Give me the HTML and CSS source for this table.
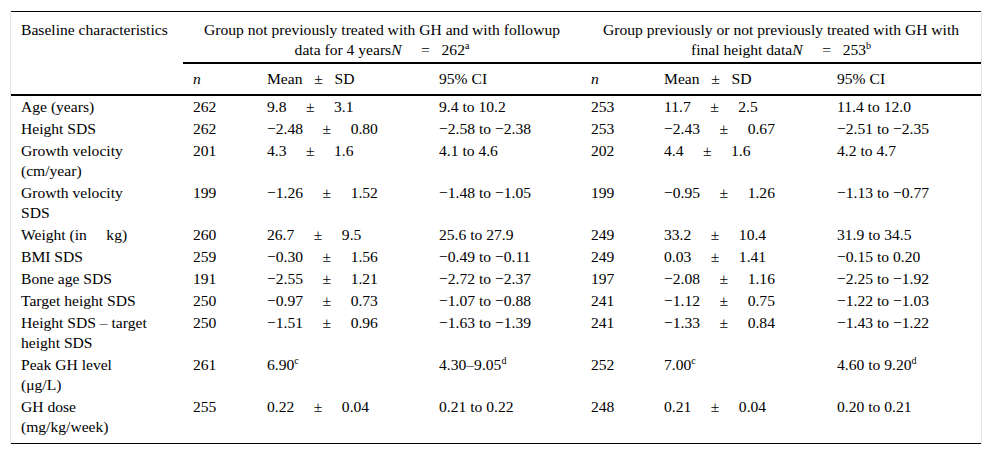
FILE: index.html
```html
<!DOCTYPE html>
<html>
<head>
<meta charset="utf-8">
<link rel="stylesheet" href="styles.css">
</head>
<body>
<div class="frame">
<table class="data">
<colgroup>
<col class="c-label"><col class="c-n1"><col class="c-m1"><col class="c-ci1"><col class="c-n2"><col class="c-m2"><col class="c-ci2">
</colgroup>
<thead>
<tr class="hr1">
<th rowspan="2" class="lbl">Baseline characteristics</th>
<th colspan="3" class="grp">Group not previously treated with GH and with followup data for 4 years<i>N</i>&emsp; =&ensp; 262<sup>a</sup></th>
<th colspan="3" class="grp">Group previously or not previously treated with GH with final height data<i>N</i>&emsp; =&ensp; 253<sup>b</sup></th>
</tr>
<tr class="hr2">
<th><i>n</i></th><th>Mean&ensp; ±&ensp; SD</th><th>95% CI</th>
<th><i>n</i></th><th>Mean&ensp; ±&ensp; SD</th><th>95% CI</th>
</tr>
</thead>
<tbody>
<tr><td>Age (years)</td><td>262</td><td>9.8 &emsp;±&emsp; 3.1</td><td>9.4 to 10.2</td><td>253</td><td>11.7 &emsp;±&emsp; 2.5</td><td>11.4 to 12.0</td></tr>
<tr><td>Height SDS</td><td>262</td><td>−2.48 &emsp;±&emsp; 0.80</td><td>−2.58 to −2.38</td><td>253</td><td>−2.43 &emsp;±&emsp; 0.67</td><td>−2.51 to −2.35</td></tr>
<tr><td>Growth velocity (cm/year)</td><td>201</td><td>4.3 &emsp;±&emsp; 1.6</td><td>4.1 to 4.6</td><td>202</td><td>4.4 &emsp;±&emsp; 1.6</td><td>4.2 to 4.7</td></tr>
<tr><td>Growth velocity SDS</td><td>199</td><td>−1.26 &emsp;±&emsp; 1.52</td><td>−1.48 to −1.05</td><td>199</td><td>−0.95 &emsp;±&emsp; 1.26</td><td>−1.13 to −0.77</td></tr>
<tr><td>Weight (in&emsp; kg)</td><td>260</td><td>26.7 &emsp;±&emsp; 9.5</td><td>25.6 to 27.9</td><td>249</td><td>33.2 &emsp;±&emsp; 10.4</td><td>31.9 to 34.5</td></tr>
<tr><td>BMI SDS</td><td>259</td><td>−0.30 &emsp;±&emsp; 1.56</td><td>−0.49 to −0.11</td><td>249</td><td>0.03 &emsp;±&emsp; 1.41</td><td>−0.15 to 0.20</td></tr>
<tr><td>Bone age SDS</td><td>191</td><td>−2.55 &emsp;±&emsp; 1.21</td><td>−2.72 to −2.37</td><td>197</td><td>−2.08 &emsp;±&emsp; 1.16</td><td>−2.25 to −1.92</td></tr>
<tr><td>Target height SDS</td><td>250</td><td>−0.97 &emsp;±&emsp; 0.73</td><td>−1.07 to −0.88</td><td>241</td><td>−1.12 &emsp;±&emsp; 0.75</td><td>−1.22 to −1.03</td></tr>
<tr><td>Height SDS – target height SDS</td><td>250</td><td>−1.51 &emsp;±&emsp; 0.96</td><td>−1.63 to −1.39</td><td>241</td><td>−1.33 &emsp;±&emsp; 0.84</td><td>−1.43 to −1.22</td></tr>
<tr><td>Peak GH level (μg/L)</td><td>261</td><td>6.90<sup>c</sup></td><td>4.30–9.05<sup>d</sup></td><td>252</td><td>7.00<sup>c</sup></td><td>4.60 to 9.20<sup>d</sup></td></tr>
<tr class="last"><td>GH dose (mg/kg/week)</td><td>255</td><td>0.22 &emsp;±&emsp; 0.04</td><td>0.21 to 0.22</td><td>248</td><td>0.21 &emsp;±&emsp; 0.04</td><td>0.20 to 0.21</td></tr>
</tbody>
</table>
</div>
</body>
</html>
```
FILE: styles.css
```css
html, body {
  margin: 0;
  padding: 0;
  background: #fff;
}
body {
  font-family: "Liberation Serif", "Times New Roman", serif;
  font-size: 15.6px;
  line-height: 20px;
  color: #000;
}
.frame {
  margin: 11px 0 0 10px;
  width: 970px;
  border-left: 1px solid #e3e3e3;
  border-right: 1px solid #e3e3e3;
}
.data {
  width: 970px;
  border-collapse: collapse;
  table-layout: fixed;
  border-top: 1px solid #000;
  border-bottom: 1px solid #000;
}
.c-label { width: 172px; }
.c-n1 { width: 74px; }
.c-m1 { width: 172px; }
.c-ci1 { width: 152px; }
.c-n2 { width: 73px; }
.c-m2 { width: 173px; }
.c-ci2 { width: 154px; }
th, td {
  font-weight: normal;
  text-align: left;
  vertical-align: top;
  padding: 1px 10px;
}
tbody td:first-child {
  padding-right: 28px;
}
.hr1 th {
  padding-top: 8px;
  padding-bottom: 2px;
}
.hr1 th.grp {
  text-align: center;
  border-bottom: 2px solid #000;
}
.hr1 th.lbl {
  border-bottom: 2px solid #000;
  white-space: nowrap;
}
.hr2 th {
  padding-top: 5px;
  padding-bottom: 5px;
  border-bottom: 2px solid #000;
}
.last td {
  padding-bottom: 6px;
}
sup {
  font-size: 10px;
  line-height: 0;
  vertical-align: 6px;
}
```
